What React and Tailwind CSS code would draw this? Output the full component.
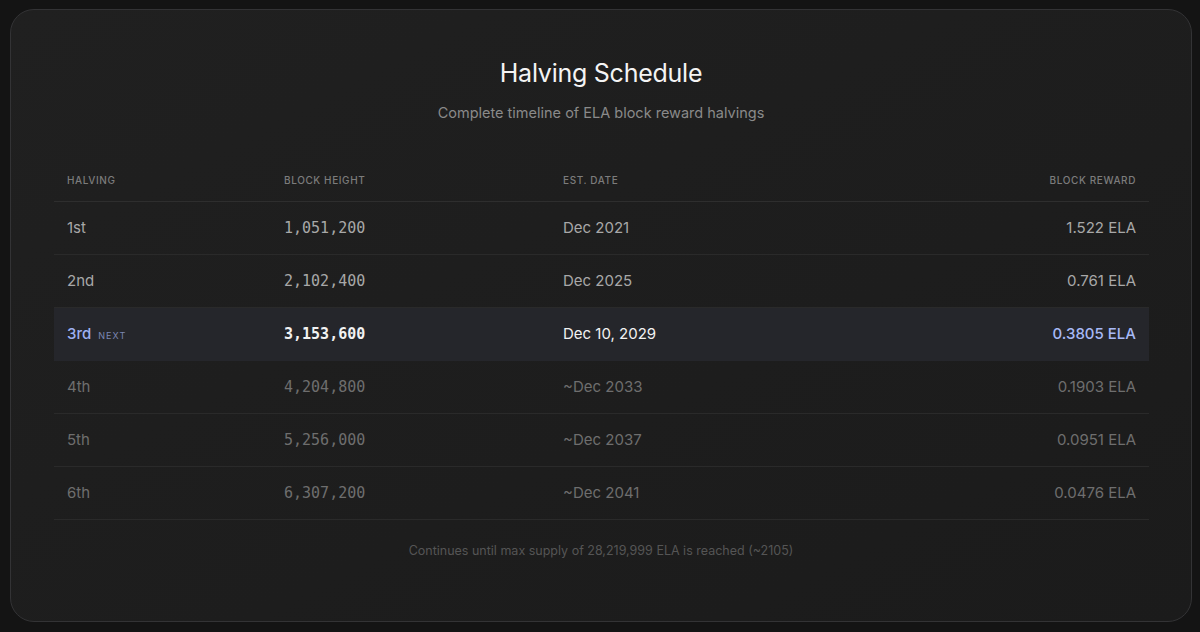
import React from "react"

const rows = [
  { n: "1st", height: "1,051,200", date: "Dec 2021", reward: "1.522 ELA", state: "past" },
  { n: "2nd", height: "2,102,400", date: "Dec 2025", reward: "0.761 ELA", state: "past" },
  { n: "3rd", height: "3,153,600", date: "Dec 10, 2029", reward: "0.3805 ELA", state: "next" },
  { n: "4th", height: "4,204,800", date: "~Dec 2033", reward: "0.1903 ELA", state: "future" },
  { n: "5th", height: "5,256,000", date: "~Dec 2037", reward: "0.0951 ELA", state: "future" },
  { n: "6th", height: "6,307,200", date: "~Dec 2041", reward: "0.0476 ELA", state: "future" },
]

const mono = { fontFamily: "'DejaVu Sans Mono', 'Liberation Mono', monospace" }

function Row({ row }) {
  const isNext = row.state === "next"
  const base = isNext ? "text-[#f2f2f2]" : row.state === "past" ? "text-[#a8a8a8]" : "text-[#6e6e6e]"
  return (
    <div
      className={`grid grid-cols-[217px_279px_1fr_auto] items-center h-[53px] border-b ${
        isNext ? "bg-[#25262b] border-[#25262b]" : "border-[#2a2a2a]"
      } ${base}`}
    >
      <div className="px-[13px] flex items-baseline gap-[7px]">
        <span className={`text-[15px] ${isNext ? "text-[#9db0f2] font-medium" : ""}`}>{row.n}</span>
        {isNext && <span className="text-[9px] tracking-[0.12em] text-[#7b87b3]">NEXT</span>}
      </div>
      <div className={`px-[13px] text-[15px] ${isNext ? "font-bold" : ""}`} style={mono}>
        {row.height}
      </div>
      <div className="px-[13px] text-[15px]">{row.date}</div>
      <div className={`px-[13px] text-[15px] text-right ${isNext ? "text-[#a7b9f6] font-medium" : ""}`}>
        {row.reward}
      </div>
    </div>
  )
}

export default function App() {
  return (
    <div
      className="w-[1200px] h-[632px] bg-[#141414] p-[9px] pl-[10px] pr-[8px]"
      style={{ fontFamily: "Inter, 'Liberation Sans', sans-serif" }}
    >
      <div className="h-[613px] rounded-[24px] border border-[#333335] bg-gradient-to-br from-[#202020] to-[#1b1b1b] flex flex-col items-center pt-[47px]">
        <h2 className="text-[25px] leading-[32px] text-[#f4f4f4] tracking-[-0.01em]">Halving Schedule</h2>
        <p className="mt-[13px] text-[14.5px] text-[#8a8a8a]">Complete timeline of ELA block reward halvings</p>

        <div className="w-[1095px] mt-[36px] self-start ml-[43px]">
          <div className="grid grid-cols-[217px_279px_1fr_auto] items-center h-[42px] border-b border-[#2e2e2e] text-[10px] tracking-[0.06em] text-[#7c7c7c] font-medium">
            <div className="px-[13px]">HALVING</div>
            <div className="px-[13px]">BLOCK HEIGHT</div>
            <div className="px-[13px]">EST. DATE</div>
            <div className="px-[13px] text-right">BLOCK REWARD</div>
          </div>
          {rows.map((r) => (
            <Row key={r.n} row={r} />
          ))}
        </div>

        <p className="mt-[22px] text-[12.5px] text-[#555555]">
          Continues until max supply of 28,219,999 ELA is reached (~2105)
        </p>
      </div>
    </div>
  )
}
